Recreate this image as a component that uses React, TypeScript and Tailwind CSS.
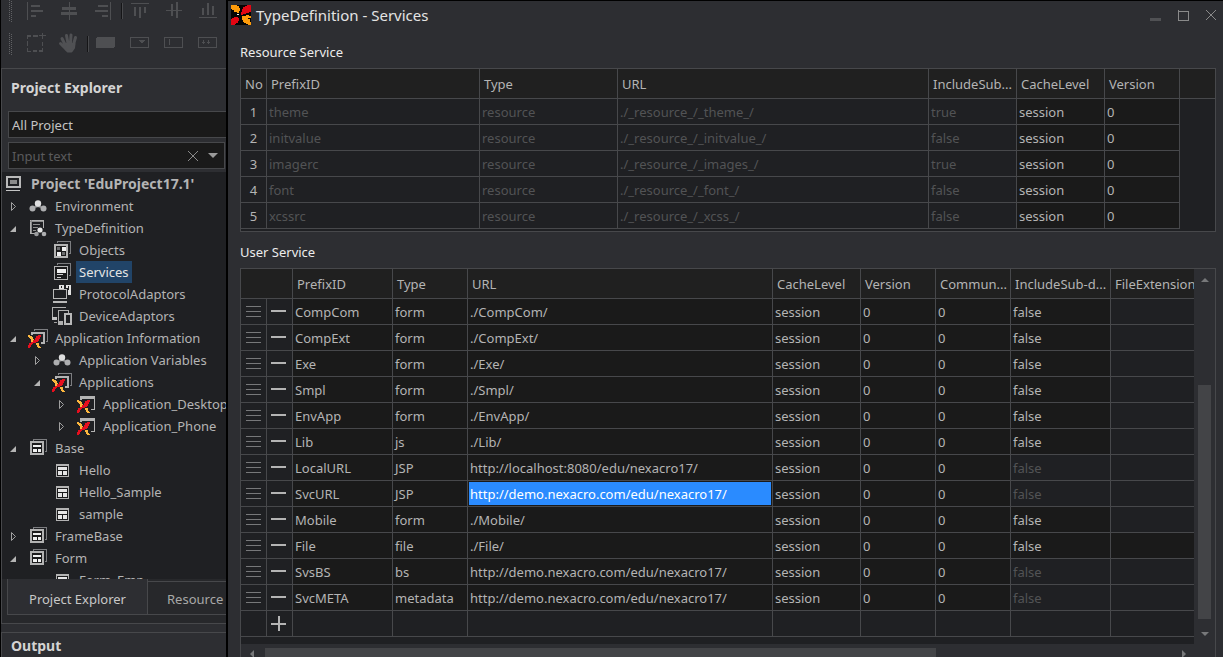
import { Fragment } from 'react';
import type { ReactNode } from 'react';
import clsx from 'clsx';

type IconKey =
  | 'project' | 'variables' | 'typedef' | 'objects' | 'services' | 'protocol'
  | 'device' | 'appGroup' | 'app' | 'formGroup' | 'form';

type TreeNode = { label: string; icon: IconKey; level: number; state?: 'open' | 'closed' };

const TREE: TreeNode[] = [
  { label: 'Environment', icon: 'variables', level: 0, state: 'closed' },
  { label: 'TypeDefinition', icon: 'typedef', level: 0, state: 'open' },
  { label: 'Objects', icon: 'objects', level: 1 },
  { label: 'Services', icon: 'services', level: 1 },
  { label: 'ProtocolAdaptors', icon: 'protocol', level: 1 },
  { label: 'DeviceAdaptors', icon: 'device', level: 1 },
  { label: 'Application Information', icon: 'appGroup', level: 0, state: 'open' },
  { label: 'Application Variables', icon: 'variables', level: 1, state: 'closed' },
  { label: 'Applications', icon: 'appGroup', level: 1, state: 'open' },
  { label: 'Application_Desktop', icon: 'app', level: 2, state: 'closed' },
  { label: 'Application_Phone', icon: 'app', level: 2, state: 'closed' },
  { label: 'Base', icon: 'formGroup', level: 0, state: 'open' },
  { label: 'Hello', icon: 'form', level: 1 },
  { label: 'Hello_Sample', icon: 'form', level: 1 },
  { label: 'sample', icon: 'form', level: 1 },
  { label: 'FrameBase', icon: 'formGroup', level: 0, state: 'closed' },
  { label: 'Form', icon: 'formGroup', level: 0, state: 'open' },
  { label: 'Form_Emp', icon: 'form', level: 1 },
];

const INDENT = ['pl-0', 'pl-6', 'pl-12'];

const RESOURCES = [
  { id: 'theme', url: './_resource_/_theme_/', sub: 'true' },
  { id: 'initvalue', url: './_resource_/_initvalue_/', sub: 'false' },
  { id: 'imagerc', url: './_resource_/_images_/', sub: 'true' },
  { id: 'font', url: './_resource_/_font_/', sub: 'false' },
  { id: 'xcssrc', url: './_resource_/_xcss_/', sub: 'false' },
];

const SERVICES = [
  { id: 'CompCom', type: 'form', url: './CompCom/' },
  { id: 'CompExt', type: 'form', url: './CompExt/' },
  { id: 'Exe', type: 'form', url: './Exe/' },
  { id: 'Smpl', type: 'form', url: './Smpl/' },
  { id: 'EnvApp', type: 'form', url: './EnvApp/' },
  { id: 'Lib', type: 'js', url: './Lib/' },
  { id: 'LocalURL', type: 'JSP', url: 'http://localhost:8080/edu/nexacro17/' },
  { id: 'SvcURL', type: 'JSP', url: 'http://demo.nexacro.com/edu/nexacro17/' },
  { id: 'Mobile', type: 'form', url: './Mobile/' },
  { id: 'File', type: 'file', url: './File/' },
  { id: 'SvsBS', type: 'bs', url: 'http://demo.nexacro.com/edu/nexacro17/' },
  { id: 'SvcMETA', type: 'metadata', url: 'http://demo.nexacro.com/edu/nexacro17/' },
];

// types where include-sub-directory can not be changed
const LOCKED = ['JSP', 'bs', 'metadata'];

/* ---------- icons ---------- */

function MiniX() {
  return (
    <g>
      <path d="M0 0h2v1h2v1h1v2h1v2h-1v1h-2v-3h-1v-1h-1v-1h-1z" fill="#fdb73e" />
      <path d="M13 0h-3v1h-2v2h-1v2h-2v3h3v-1h2v-1h1v-2h1v-2h1z" fill="#e60f1e" />
      <path d="M5 7h-2v1h-2v2h-1v3h2v-1h1v-2h1v-1h1z" fill="#e60f1e" />
      <path d="M8 8h3v3h1v1h1v1h-3v-1h-1v-2h-1z" fill="#fdb73e" />
    </g>
  );
}

function BackSheet() {
  return <path d="M7.5 4v-1.5h13v12h-2" fill="none" stroke="#7c7d80" />;
}

const ICONS: Record<IconKey, ReactNode> = {
  project: (
    <>
      <rect x="1" y="4" width="13" height="10" fill="none" stroke="#b9b9b9" strokeWidth="2" />
      <rect x="4" y="7" width="7" height="4" fill="#8b8b8b" />
      <rect x="0" y="17" width="14" height="1" fill="#c4c4c4" />
    </>
  ),
  variables: (
    <g shapeRendering="auto">
      <path d="M12 9v3M9 12l3-1 3 1" stroke="#8c8d8f" strokeWidth="2" fill="none" />
      <circle cx="6.5" cy="13.5" r="3" fill="#adaeb0" />
      <circle cx="17.5" cy="13.5" r="3" fill="#adaeb0" />
      <circle cx="12" cy="8.5" r="3.2" fill="#dededf" />
    </g>
  ),
  typedef: (
    <>
      <path d="M10 16.5H4.500V3.500H17.500V11" fill="none" stroke="#b0b0b0" strokeWidth="1" />
      <path d="M5.500 3v13M4 4.500h13" stroke="#8b8b8b" />
      <path d="M7 7.500h7M7 10.500h5M7 13.500h3" stroke="#8e8e8e" />
      <g shapeRendering="auto">
        <circle cx="14" cy="13" r="2.600" fill="#e8e8e8" />
        <circle cx="10.500" cy="17" r="2.300" fill="#9a9b9d" />
        <circle cx="18" cy="17" r="2.300" fill="#adaeb0" />
      </g>
    </>
  ),
  objects: (
    <>
      <BackSheet />
      <rect x="5" y="6" width="12" height="12" fill="#1b1b1c" stroke="#b3b3b3" strokeWidth="2" />
      <rect x="7" y="8" width="3" height="3" fill="#6b6c6e" />
      <rect x="12" y="8" width="4" height="4" fill="#f0f0f0" />
      <rect x="7" y="13" width="4" height="4" fill="#f0f0f0" />
      <rect x="12" y="13" width="3" height="3" fill="#6b6c6e" />
    </>
  ),
  services: (
    <>
      <BackSheet />
      <rect x="4.5" y="5.5" width="13" height="13" fill="#1b1b1c" stroke="#b3b3b3" strokeWidth="1" />
      <rect x="7" y="8" width="9" height="4" fill="#f0f0f0" />
      <rect x="7" y="13" width="6" height="1" fill="#d0d0d0" />
      <rect x="7" y="16" width="4" height="1" fill="#d0d0d0" />
    </>
  ),
  protocol: (
    <>
      <path d="M9 2h5v4h-5zM16 2h5v10h-3v-7h-2z" fill="#e2e2e2" />
      <path d="M11 3h1v2h-1zM18 3h1v4h-1z" fill="#1f2023" />
      <rect x="3.500" y="6.500" width="13" height="9" fill="#1f2023" stroke="#b9b9b9" />
      <rect x="3" y="18" width="14" height="2" fill="#b9b9b9" />
    </>
  ),
  device: (
    <>
      <path d="M2.500 13V2.500H15.500" fill="none" stroke="#b0b0b0" />
      <rect x="2" y="12" width="5" height="3" fill="#c4c4c4" />
      <rect x="4" y="17" width="3" height="1" fill="#a0a0a0" />
      <path d="M13 19.500H8.500V5.500H18.500V8" fill="none" stroke="#b0b0b0" />
      <rect x="8" y="16" width="5" height="4" fill="#b0b0b0" />
      <rect x="15" y="9" width="6" height="10" fill="#1f2023" stroke="#b9b9b9" strokeWidth="2" />
    </>
  ),
  appGroup: (
    <>
      <path d="M8.500 4v-1.500h13v12h-2" fill="none" stroke="#7c7d80" />
      <path d="M6 8V6H18V16H15" fill="none" stroke="#b3b3b3" strokeWidth="2" />
      <g transform="translate(2 8)"><MiniX /></g>
    </>
  ),
  app: (
    <>
      <path d="M6 3h15v14h-4v-1h3v-10h-12v1h-2z" fill="#b3b3b3" />
      <g transform="translate(3 7)"><MiniX /></g>
    </>
  ),
  formGroup: (
    <>
      <BackSheet />
      <rect x="5" y="5" width="12" height="12" fill="#1b1b1c" stroke="#b3b3b3" strokeWidth="2" />
      <rect x="7" y="8" width="8" height="2" fill="#f0f0f0" />
      <rect x="7" y="12" width="4" height="3" fill="#f0f0f0" />
      <rect x="12" y="12" width="3" height="3" fill="#f0f0f0" />
    </>
  ),
  form: (
    <>
      <rect x="6" y="5" width="13" height="13" fill="#b3b3b3" />
      <rect x="7" y="7" width="11" height="10" fill="#1b1b1c" />
      <rect x="8" y="8" width="9" height="3" fill="#e6e6e6" />
      <rect x="8" y="12" width="4" height="4" fill="#e6e6e6" />
      <rect x="13" y="12" width="4" height="4" fill="#e6e6e6" />
    </>
  ),
};

function TreeIcon({ name }: { name: IconKey }) {
  return (
    <svg width="24" height="22" viewBox="0 0 24 22" shapeRendering="crispEdges" className="shrink-0" aria-hidden="true">
      {ICONS[name]}
    </svg>
  );
}

function Logo() {
  return (
    <svg width="20" height="20" viewBox="0 0 20 20" shapeRendering="crispEdges" aria-hidden="true">
      <rect width="20" height="20" fill="#050505" />
      <path d="M0 0h6v1h2v2h1v3h-1v2h-2v-1h-3v-2h-2v-1h-1z" fill="#ff9c0a" />
      <path d="M20 0v7h-2v1h-3v1h-3v1h-2v-3h1v-3h1v-2h2v-1h2v-1z" fill="#e30613" />
      <path d="M0 20v-6h1v-1h2v-1h4v1h1v3h-1v2h-2v1h-1v1z" fill="#e30613" />
      <path d="M11 11h4v-1h3v1h2v2h-3v1h2v3h1v3h-3v-1h-2v-1h-2v-1h-1v-2h-1z" fill="#ff9c0a" />
      <path d="M6 9h2v1h-2z" fill="#f4f4f4" />
    </svg>
  );
}

/* ---------- toolbar ---------- */

type Tool = { title: string; art: ReactNode; sep?: boolean };

const ALIGN_TOOLS: Tool[] = [
  { title: 'Align left', art: <path d="M3 2h1v18h-1zM7 5h9v2h-9zM7 10h12v2h-12zM7 15h5v2h-5z" /> },
  { title: 'Align center', art: <path d="M11 2h1v18h-1zM4 7h14v3h-14zM3 12h16v3h-16z" /> },
  { title: 'Align right', art: <path d="M18 2h1v18h-1zM6 5h10v2h-10zM3 10h13v2h-13zM10 15h6v2h-6z" /> },
  { title: 'Align top', sep: true, art: <path d="M2 3h18v1h-18zM5 7h2v9h-2zM10 7h2v11h-2zM15 7h2v6h-2z" /> },
  { title: 'Align middle', art: <path d="M3 10h16v1h-16zM8 4h2v12h-2zM13 2h2v16h-2z" /> },
  { title: 'Align bottom', art: <path d="M2 17h18v1h-18zM5 8h2v7h-2zM10 3h2v12h-2zM15 6h2v9h-2z" /> },
];

const WIDGET_TOOLS: Tool[] = [
  {
    title: 'Select',
    art: <path d="M3 2h4v2h-3v2h-1zM9 2h5v2h-5zM3 8h1v5h-1zM18 9h1v4h-1zM3 15h1v3h3v1h-4zM9 17h4v2h-4zM15 17h3v-2h1v4h-4zM18 0h1v2h3v1h-3v3h-1v-3h-3v-1h3z" />,
  },
  {
    title: 'Hand',
    art: (
      <g fill="none" stroke="#505154" strokeLinecap="round" strokeWidth="3" shapeRendering="auto">
        <path d="M4 5.500l3 6M8.500 2.500l1.500 8M13 2l-.5 8M17.500 4.500l-2 7M2.500 10.500l6 6" />
        <path d="M8 11h8.500l-.5 4-2.500 3.500h-4l-3-4z" fill="#505154" strokeLinejoin="round" strokeWidth="2" />
      </g>
    ),
  },
  { title: 'Button', sep: true, art: <rect x="1" y="4" width="19" height="11" rx="2" /> },
  { title: 'Combo', art: <path fillRule="evenodd" d="M1 4h19v11h-19zM2 5v9h17v-9zM10 7h6v1h-1v1h-1v1h-2v-1h-1v-1h-1z" /> },
  { title: 'Edit', art: <path fillRule="evenodd" d="M1 4h19v11h-19zM2 5v9h17v-9zM6 6h1v6h-1z" /> },
  { title: 'MaskEdit', art: <path fillRule="evenodd" d="M1 4h19v11h-19zM2 5v9h17v-9zM6 7h1v2h1v1h-1v1h-1v-1h-1v-1h1zM11 7h1v2h1v1h-1v1h-1v-1h-1v-1h1z" /> },
];

function ToolRow({ tools }: { tools: Tool[] }) {
  return (
    <div className="flex h-[22px] items-center pl-2">
      <svg width="9" height="22" className="shrink-0" shapeRendering="crispEdges" aria-hidden="true">
        <path d="M0.5 0v22M2.500 1v22" stroke="#606164" strokeDasharray="1 1" />
      </svg>
      {tools.map((t) => (
        <Fragment key={t.title}>
          {t.sep && (
            <span className="w-[3px] shrink-0 pl-px">
              <span className="block h-4 border-l border-r border-l-[#151517] border-r-[#48494c]" />
            </span>
          )}
          <button title={t.title} className="flex w-[34px] shrink-0 justify-center">
            <svg width="22" height="22" viewBox="0 0 22 22" fill="#4e4f52" shapeRendering="crispEdges">
              {t.art}
            </svg>
          </button>
        </Fragment>
      ))}
    </div>
  );
}

/* ---------- left side ---------- */

function Explorer() {
  return (
    <section className="flex min-h-0 flex-1 flex-col border-t border-l border-[#47484b]">
      <h2 className="h-[42px] shrink-0 pl-[9px] text-sm leading-[38px] font-bold text-[#d4d4d4]">Project Explorer</h2>
      <div className="flex shrink-0 flex-col gap-1 pb-[3px] pl-[6px]">
        <select
          aria-label="Project scope"
          className="-mr-8 h-[27px] appearance-none border border-[#47484b] bg-[#1a1a1a] pl-[3px] text-[#c4c4c4] outline-none"
        >
          <option>All Project</option>
        </select>
        <div className="mr-px flex h-[27px] items-center border border-[#47484b] bg-[#1a1a1a] pr-px">
          <input aria-label="Filter tree" placeholder="Input text" className="min-w-0 flex-1 pl-[3px] outline-none placeholder:text-[#5a5b5d]" />
          <button title="Clear" className="flex w-5 justify-center">
            <svg width="12" height="12" viewBox="0 0 12 12" stroke="#8a8a8a" fill="none">
              <path d="M1 1l10 10M11 1L1 11" />
            </svg>
          </button>
          <button title="History" className="flex w-5 justify-center">
            <svg width="10" height="6" viewBox="0 0 10 6" fill="#9a9a9a">
              <path d="M0 0h10L5 5z" />
            </svg>
          </button>
        </div>
      </div>
      <ul role="tree" className="min-h-0 flex-1 overflow-hidden bg-[#1f2023] pt-px whitespace-nowrap">
        <li role="treeitem" className="flex h-[22px] items-center pl-1 text-sm font-bold">
          <TreeIcon name="project" />
          <span className="pl-px">Project &#39;EduProject17.1&#39;</span>
        </li>
        {TREE.map((n) => (
          <li key={n.label} role="treeitem" className={clsx('flex h-[22px] items-center', INDENT[n.level])}>
            {n.state ? (
              <button title="Toggle" className="w-6 shrink-0">
                <svg width="24" height="22" viewBox="0 0 24 22">
                  {n.state === 'closed' ? (
                    <path d="M9.500 7.500v8l4-4z" fill="none" stroke="#a0a0a0" />
                  ) : (
                    <path d="M14 9v6H8z" fill="#b4b4b4" />
                  )}
                </svg>
              </button>
            ) : (
              <span className="w-6 shrink-0" />
            )}
            <TreeIcon name={n.icon} />
            <span
              className={clsx('ml-[2px] px-[3px] leading-[22px]', n.label === 'Services' && 'bg-[#214468] text-[#e4e4e4]')}
            >
              {n.label}
            </span>
          </li>
        ))}
      </ul>
      <div role="tablist" className="flex h-[44px] shrink-0 items-start overflow-hidden bg-[#27282b] pl-[5px]">
        <button role="tab" aria-selected="true" className="h-9 w-[141px] shrink-0 border border-t-0 border-[#47484b] bg-[#2d2e32] pt-1 text-[#c8c8c8]">
          Project Explorer
        </button>
        <button role="tab" aria-selected="false" className="mt-[2px] h-[34px] flex-1 border-t border-b border-[#47484b] pt-[2px] pl-[19px] text-left text-[#a8a8a8]">
          Resource
        </button>
      </div>
    </section>
  );
}

function Sidebar() {
  return (
    <aside className="flex w-[226px] shrink-0 flex-col overflow-hidden border-l border-black">
      <div className="flex h-[68px] shrink-0 flex-col gap-[11px]">
        <ToolRow tools={ALIGN_TOOLS} />
        <ToolRow tools={WIDGET_TOOLS} />
      </div>
      <Explorer />
      <section className="shrink-0 border-t border-[#47484b] pt-2">
        <h2 className="h-[25px] border-t border-l border-[#47484b] pl-[9px] text-sm leading-[25px] font-bold text-[#d4d4d4]">Output</h2>
      </section>
    </aside>
  );
}

/* ---------- grids ---------- */

function Th({ children }: { children?: ReactNode }) {
  return (
    <th className="overflow-hidden border-r border-b border-[#47484b] bg-[#202020] pl-1 text-left font-normal whitespace-nowrap">
      {children}
    </th>
  );
}

function Td({ children, locked }: { children?: ReactNode; locked?: boolean }) {
  return (
    <td
      className={clsx(
        'truncate border-r border-b border-[#47484b] pt-px pl-[2px]',
        locked ? 'bg-[#1f2023] text-[#525355]' : 'bg-[#1a1a1a]',
      )}
    >
      {children}
    </td>
  );
}

function ResourceGrid() {
  return (
    <div className="overflow-hidden border border-[#47484b] bg-[#1f2023] pb-[2px]">
      <table className="w-full table-fixed border-separate border-spacing-0">
        <colgroup>
          <col className="w-[26px]" />
          <col className="w-[213px]" />
          <col className="w-[138px]" />
          <col className="w-[311px]" />
          <col className="w-[88px]" />
          <col className="w-[88px]" />
          <col className="w-[75px]" />
          <col />
        </colgroup>
        <thead>
          <tr className="h-[30px]">
            <Th>No</Th>
            <Th>PrefixID</Th>
            <Th>Type</Th>
            <Th>URL</Th>
            <Th>IncludeSub...</Th>
            <Th>CacheLevel</Th>
            <Th>Version</Th>
            <th className="border-b border-[#47484b] bg-[#202020]" />
          </tr>
        </thead>
        <tbody>
          {RESOURCES.map((r, i) => (
            <tr key={r.id} className="h-[26px]">
              <td className="border-r border-b border-[#47484b] text-center">{i + 1}</td>
              <Td locked>{r.id}</Td>
              <Td locked>resource</Td>
              <Td locked>{r.url}</Td>
              <Td locked>{r.sub}</Td>
              <Td>session</Td>
              <Td>0</Td>
              <td />
            </tr>
          ))}
        </tbody>
      </table>
    </div>
  );
}

function ServiceTable() {
  return (
    <table className="w-[1020px] table-fixed border-separate border-spacing-0">
      <colgroup>
        <col className="w-[26px]" />
        <col className="w-[26px]" />
        <col className="w-[100px]" />
        <col className="w-[75px]" />
        <col className="w-[305px]" />
        <col className="w-[88px]" />
        <col className="w-[75px]" />
        <col className="w-[75px]" />
        <col className="w-[100px]" />
        <col className="w-[150px]" />
      </colgroup>
      <thead>
        <tr className="h-[30px]">
          <th colSpan={2} className="border-r border-b border-[#47484b] bg-[#202020]" />
          <Th>PrefixID</Th>
          <Th>Type</Th>
          <Th>URL</Th>
          <Th>CacheLevel</Th>
          <Th>Version</Th>
          <Th>Commun...</Th>
          <Th>IncludeSub-d...</Th>
          <Th>FileExtension</Th>
        </tr>
      </thead>
      <tbody>
        {SERVICES.map((s) => (
          <tr key={s.id} className="h-[26px]">
            <td className="border-r border-b border-[#47484b]">
              <button title="Move row" className="flex w-full justify-center">
                <svg width="15" height="13" viewBox="0 0 15 13" fill="#77787a" shapeRendering="crispEdges">
                  <path d="M0 1h15v1h-15zM0 6h15v1h-15zM0 11h15v1h-15z" />
                </svg>
              </button>
            </td>
            <td className="border-r border-b border-[#47484b]">
              <button title="Delete row" className="flex w-full pl-1">
                <svg width="15" height="15" viewBox="0 0 15 15" fill="#b4b4b4" shapeRendering="crispEdges">
                  <path d="M0 6h15v2h-15z" />
                </svg>
              </button>
            </td>
            <Td>{s.id}</Td>
            <Td>{s.type}</Td>
            {s.id === 'SvcURL' ? (
              <td className="border-r border-b border-[#47484b] bg-[#1a1a1a] p-px">
                <div className="h-[23px] truncate bg-[#2a8bff] pl-px leading-6 text-white">{s.url}</div>
              </td>
            ) : (
              <Td>{s.url}</Td>
            )}
            <Td>session</Td>
            <Td>0</Td>
            <Td>0</Td>
            <Td locked={LOCKED.includes(s.type)}>false</Td>
            <Td locked={s.type !== 'file'} />
          </tr>
        ))}
        <tr className="h-[26px]">
          <Td locked />
          <td className="border-r border-b border-[#47484b]">
            <button title="Add row" className="flex w-full pl-1">
              <svg width="15" height="15" viewBox="0 0 15 15" fill="#b4b4b4" shapeRendering="crispEdges">
                <path d="M0 7h7v-7h2v7h6v2h-6v6h-2v-6h-7z" />
              </svg>
            </button>
          </td>
          {['id', 'type', 'url', 'cache', 'version', 'comm', 'sub', 'ext'].map((c) => (
            <Td key={c} locked />
          ))}
        </tr>
      </tbody>
    </table>
  );
}

function ServiceGrid() {
  return (
    <div className="flex min-h-0 flex-1 flex-col border border-b-0 border-[#47484b]">
      <div className="flex min-h-0 flex-1">
        <div className="min-w-0 flex-1 overflow-hidden bg-[#1f2023]">
          <ServiceTable />
        </div>
        <div className="flex w-[21px] shrink-0 flex-col items-center pt-[9px] pb-[7px]">
          <svg width="8" height="5" viewBox="0 0 8 5" fill="#77787a" className="shrink-0">
            <path d="M0 4h8L4 0z" />
          </svg>
          <div className="flex w-[13px] flex-1 flex-col pt-[11px] pb-[13px]">
            <div className="flex-[91]" />
            <div className="flex-[234] bg-[#434447]" />
          </div>
          <svg width="8" height="5" viewBox="0 0 8 5" fill="#77787a" className="shrink-0">
            <path d="M0 0h8L4 4z" />
          </svg>
        </div>
      </div>
      <div className="flex h-[13px] shrink-0 overflow-hidden pt-1 pr-7 pl-[9px]">
        <svg width="5" height="8" viewBox="0 0 5 8" fill="#77787a" className="mt-[2px] shrink-0">
          <path d="M4 0v8L0 4z" />
        </svg>
        <div className="flex flex-1 pr-1 pl-[10px]">
          <div className="flex-[669] bg-[#434447]" />
          <div className="flex-[241]" />
        </div>
        <svg width="5" height="8" viewBox="0 0 5 8" fill="#77787a" className="mt-[2px] shrink-0">
          <path d="M0 0v8l4-4z" />
        </svg>
      </div>
    </div>
  );
}

function ServicesWindow() {
  return (
    <main className="flex min-w-0 flex-1 flex-col border-t border-l-2 border-black">
      <header className="flex h-[34px] shrink-0 items-center gap-[5px] pr-[6px] pb-[6px] pl-[3px]">
        <Logo />
        <h1 className="flex-1 text-[15px] text-[#e4e4e4]">TypeDefinition - Services</h1>
        <div className="flex gap-4">
          <button title="Minimize" className="mr-px">
            <svg width="11" height="11" fill="#505154"><path d="M0 8h11v3h-11z" /></svg>
          </button>
          <button title="Maximize">
            <svg width="11" height="11" fill="none" stroke="#8a8a8a" shapeRendering="crispEdges">
              <path d="M0.500 0v10.500h10V1M0 1h11" />
            </svg>
          </button>
          <button title="Close">
            <svg width="12" height="12" fill="none" stroke="#8a8a8a"><path d="M1 1l10 10M11 1L1 11" /></svg>
          </button>
        </div>
      </header>
      <div className="flex min-h-0 flex-1 flex-col pr-[7px] pl-3">
        <h2 className="h-[33px] shrink-0 leading-[34px] text-[#ececec]">Resource Service</h2>
        <ResourceGrid />
        <h2 className="h-9 shrink-0 leading-[40px] text-[#ececec]">User Service</h2>
        <ServiceGrid />
      </div>
    </main>
  );
}

export default function App() {
  return (
    <div className="flex h-screen overflow-hidden bg-[#2d2e32] font-['Noto_Sans',sans-serif] text-[13px] leading-5 text-[#b4b4b4]">
      <Sidebar />
      <ServicesWindow />
    </div>
  );
}
